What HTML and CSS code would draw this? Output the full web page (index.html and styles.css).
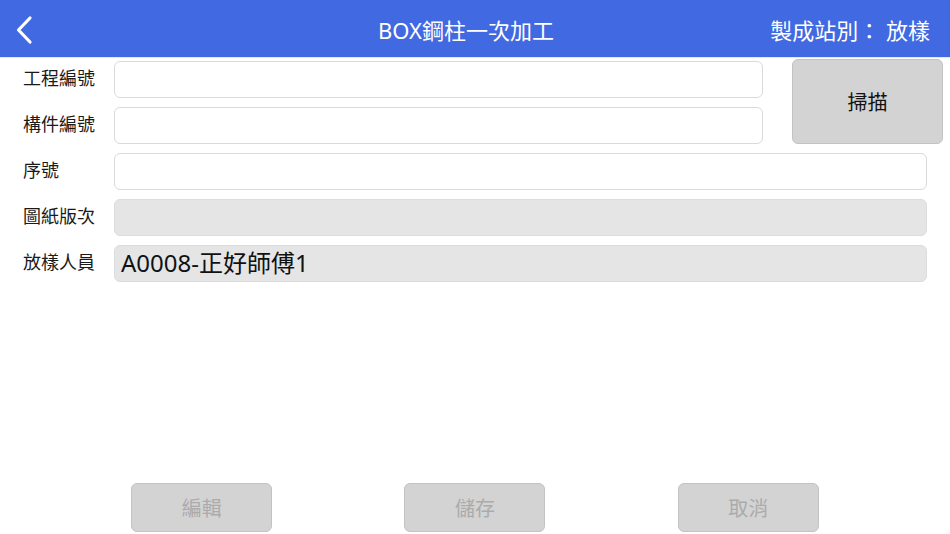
FILE: index.html
```html
<!DOCTYPE html>
<html lang="zh-Hant">
<head>
  <meta charset="UTF-8" />
  <title>BOX鋼柱一次加工</title>
  <meta name="viewport" content="width=device-width, initial-scale=1.0"/>
  <link rel="stylesheet" href="styles.css">
</head>
<body>

  <header class="topbar">
    <a class="back" href="#">
      <svg width="20" height="32" viewBox="0 0 20 32">
        <polyline points="14,3 2.5,15 14,27" fill="none" stroke="#fff" stroke-width="3.2" stroke-linecap="round" stroke-linejoin="round"/>
      </svg>
    </a>
    <div class="title">BOX鋼柱一次加工</div>
    <div class="station">製成站別：&nbsp;放樣</div>
  </header>

  <main class="form">
    <label class="label">工程編號</label>
    <input class="field short" type="text">
    <button class="scan">掃描</button>

    <label class="label">構件編號</label>
    <input class="field short" type="text">

    <label class="label">序號</label>
    <input class="field wide" type="text">

    <label class="label">圖紙版次</label>
    <input class="field wide locked" type="text" disabled>

    <label class="label">放樣人員</label>
    <input class="field wide locked value" type="text" value="A0008-正好師傅1" disabled>
  </main>

  <footer class="actions">
    <button class="action" disabled>編輯</button>
    <button class="action" disabled>儲存</button>
    <button class="action" disabled>取消</button>
  </footer>

</body>
</html>
```

FILE: styles.css
```css
body {
  margin: 0;
  font-family: "Noto Sans", "Noto Sans CJK TC", sans-serif;
  background: #ffffff;
  color: #111;
  display: flex;
  flex-direction: column;
  height: 534px;
  overflow: hidden;
}

.topbar {
  height: 57px;
  background-color: #4169e1;
  border-bottom: 1px solid #e6e9f2;
  display: flex;
  align-items: center;
  position: relative;
  color: #fff;
  font-size: 22px;
}

.back {
  display: flex;
  margin-left: 16px;
  margin-top: 4px;
}

.title {
  position: absolute;
  left: 0;
  right: 18px;
  text-align: center;
  pointer-events: none;
}

.station {
  margin-left: auto;
  margin-right: 20px;
}

.form {
  display: grid;
  grid-template-columns: 91px 649px 29px 135px 16px;
  grid-auto-rows: 37px;
  row-gap: 9px;
  padding: 3px 7px 0 23px;
}

.label {
  grid-column: 1;
  align-self: center;
  padding-bottom: 6px;
  font-size: 18px;
  color: #1a1a1a;
}

.field {
  box-sizing: border-box;
  height: 37px;
  border: 1.5px solid #dadada;
  border-radius: 6px;
  background: #fff;
  font-family: inherit;
  padding: 0 6px;
  outline: none;
}

.field.short {
  grid-column: 2;
}

.field.wide {
  grid-column: 2 / 5;
}

.field.locked {
  background: #e5e5e5;
  border-color: #dcdcdc;
}

.field.value {
  font-size: 24px;
  padding-bottom: 4px;
  color: #111;
  -webkit-text-fill-color: #111;
  opacity: 1;
}

.scan {
  grid-column: 4 / 6;
  grid-row: 1 / 3;
  margin-top: -2px;
  background: #d3d3d3;
  border: 1.5px solid #c3c3c3;
  border-radius: 6px;
  font-family: inherit;
  font-size: 20px;
  color: #111;
}

.actions {
  margin-top: auto;
  padding: 0 65px 2px 65px;
  display: flex;
  justify-content: space-around;
}

.action {
  width: 141px;
  height: 49px;
  background: #d3d3d3;
  border: 1.5px solid #c3c3c3;
  border-radius: 6px;
  font-family: inherit;
  font-size: 20px;
  color: #ababab;
}
```
